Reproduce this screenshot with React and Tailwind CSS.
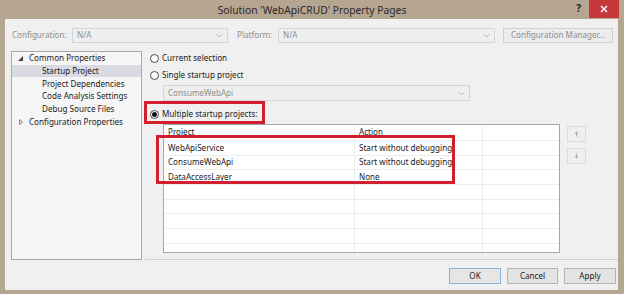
const font = { fontFamily: '"Noto Sans", "Open Sans", sans-serif' };

function Chevron() {
  return (
    <svg width="7" height="5" viewBox="0 0 7 5" className="shrink-0">
      <polyline points="0.5,1 3.5,4 6.5,1" fill="none" stroke="#b8b8b8" strokeWidth="1" />
    </svg>
  );
}

function Combo({ text, w }) {
  return (
    <div className={`${w} h-full flex items-center justify-between border border-[#d6d6d6] bg-[#efefef] pl-[4px] pr-[4px] text-[#8e8e8e]`}>
      <span>{text}</span>
      <Chevron />
    </div>
  );
}

function Radio({ checked, label }) {
  return (
    <div className="flex items-center gap-[3px] h-[13px]">
      <div className="w-[9px] h-[9px] rounded-full border border-[#4a4a4a] bg-white flex items-center justify-center">
        {checked && <div className="w-[5px] h-[5px] rounded-full bg-[#111]" />}
      </div>
      <span className="text-[#1b1b1b]">{label}</span>
    </div>
  );
}

function TreeItem({ level, label, arrow, selected }) {
  return (
    <div className={`h-[12.7px] flex items-center ${selected ? "bg-[#d9dae2]" : ""}`}>
      {level === 0 ? (
        <>
          <span className="w-[17px] flex justify-center text-[#555]">
            {arrow === "open" ? (
              <svg width="5" height="5" viewBox="0 0 5 5"><polygon points="5,0 5,5 0,5" fill="#444" /></svg>
            ) : (
              <svg width="4" height="6" viewBox="0 0 4 6"><polygon points="0.5,0.5 3.5,3 0.5,5.5" fill="none" stroke="#666" strokeWidth="0.8" /></svg>
            )}
          </span>
          <span>{label}</span>
        </>
      ) : (
        <span className="pl-[30px]">{label}</span>
      )}
    </div>
  );
}

const rows = [
  ["WebApiService", "Start without debugging"],
  ["ConsumeWebApi", "Start without debugging"],
  ["DataAccessLayer", "None"],
  ["", ""],
  ["", ""],
  ["", ""],
  ["", ""],
  ["", ""],
];

function GridRow({ a, b, header }) {
  return (
    <div className={`grid grid-cols-[191px_128px_1fr] ${header ? "h-[16px]" : "h-[14.7px]"} border-b border-[#ececec]`}>
      <div className="border-r border-[#ececec] pl-[4px] flex items-center">{a}</div>
      <div className="border-r border-[#ececec] pl-[4px] flex items-center">{b}</div>
      <div />
    </div>
  );
}

function SmallButton({ up }) {
  return (
    <div className="w-[19px] h-[16px] border border-[#dcdcdc] bg-[#efefef] flex items-center justify-center">
      <svg width="5" height="6" viewBox="0 0 5 6">
        {up ? (
          <path d="M2.5 0.5 L4.5 2.8 L3 2.8 L3 5.5 L2 5.5 L2 2.8 L0.5 2.8 Z" fill="#a8a8a8" />
        ) : (
          <path d="M2.5 5.5 L4.5 3.2 L3 3.2 L3 0.5 L2 0.5 L2 3.2 L0.5 3.2 Z" fill="#a8a8a8" />
        )}
      </svg>
    </div>
  );
}

function DialogButton({ label, def, w }) {
  return (
    <div className={`${w} h-[16px] flex items-center justify-center border ${def ? "border-[#86b3e0] bg-[#e6e6e6]" : "border-[#b4b4b4] bg-[#e3e3e3]"} text-[#1b1b1b]`}>
      {label}
    </div>
  );
}

export default function App() {
  return (
    <div className="w-[624px] h-[294px] bg-[#b6a591] flex flex-col text-[8.1px] leading-none text-[#1b1b1b] overflow-hidden" style={font}>
      {/* Title bar */}
      <div className="h-[19px] grid grid-cols-[1fr_auto_1fr] items-center">
        <div />
        <div className="text-[10.3px] text-[#2a2a2a] pt-[1px]">Solution 'WebApiCRUD' Property Pages</div>
        <div className="flex justify-end items-start h-full pr-[5px]">
          <span className="text-[10px] font-bold text-[#222] mt-[3px] mr-[8px]">?</span>
          <div className="w-[30px] h-[18px] bg-[#c7383c] flex items-center justify-center">
            <svg width="8" height="8" viewBox="0 0 8 8"><path d="M1 1 L7 7 M7 1 L1 7" stroke="white" strokeWidth="1.4" /></svg>
          </div>
        </div>
      </div>

      {/* Client area */}
      <div className="ml-[5px] mr-[6px] h-[271px] bg-[#f0f0f0] flex flex-col">
        {/* Configuration row */}
        <div className="flex items-center h-[15px] mt-[9px] pl-[7px] text-[#8e8e8e]">
          <span className="w-[60px]">Configuration:</span>
          <Combo text="N/A" w="w-[156px]" />
          <span className="w-[41px] ml-[9px]">Platform:</span>
          <Combo text="N/A" w="w-[217px]" />
          <div className="ml-[8px] w-[110px] h-full flex items-center justify-center border border-[#d0d0d0] bg-[#ececec]">
            Configuration Manager...
          </div>
        </div>

        {/* Main */}
        <div className="flex mt-[8px] h-[209px]">
          <div className="ml-[6px] w-[131px] h-full border border-[#a9a9a9] bg-[#f6f6f6] flex flex-col">
            <TreeItem level={0} arrow="open" label="Common Properties" />
            <TreeItem level={1} label="Startup Project" selected />
            <TreeItem level={1} label="Project Dependencies" />
            <TreeItem level={1} label="Code Analysis Settings" />
            <TreeItem level={1} label="Debug Source Files" />
            <TreeItem level={0} arrow="closed" label="Configuration Properties" />
          </div>

          <div className="ml-[3px] flex-1 h-full border-b border-[#d0d0d0] flex flex-col pl-[5px] relative">
            <div className="mt-[1px]"><Radio label="Current selection" /></div>
            <div className="mt-[4px]"><Radio label="Single startup project" /></div>
            <div className="ml-[13px] mt-[3px] h-[16px]">
              <Combo text="ConsumeWebApi" w="w-[307px]" />
            </div>
            <div className="mt-[7px]"><Radio checked label="Multiple startup projects:" /></div>

            <div className="flex mt-[3px] ml-[13px]">
              <div className="w-[397px] h-[129px] border border-[#a6a6a6] bg-white overflow-hidden">
                <GridRow header a="Project" b="Action" />
                {rows.map((r, i) => (
                  <GridRow key={i} a={r[0]} b={r[1]} />
                ))}
              </div>
              <div className="ml-[7px] mt-[2px] flex flex-col gap-[6px]">
                <SmallButton up />
                <SmallButton />
              </div>
            </div>

            {/* annotation boxes */}
            <div className="absolute left-[-1px] top-[50px] w-[121px] h-[23px] border-[3px] border-[#d11f2e]" />
            <div className="absolute left-[11px] top-[84px] w-[299px] h-[49px] border-[3px] border-[#d11f2e]" />
          </div>
        </div>

        {/* Buttons */}
        <div className="flex justify-end gap-[6px] mt-[8px] pr-[2px]">
          <DialogButton label="OK" def w="w-[52px]" />
          <DialogButton label="Cancel" w="w-[51px]" />
          <DialogButton label="Apply" w="w-[52px]" />
        </div>
      </div>
    </div>
  );
}
